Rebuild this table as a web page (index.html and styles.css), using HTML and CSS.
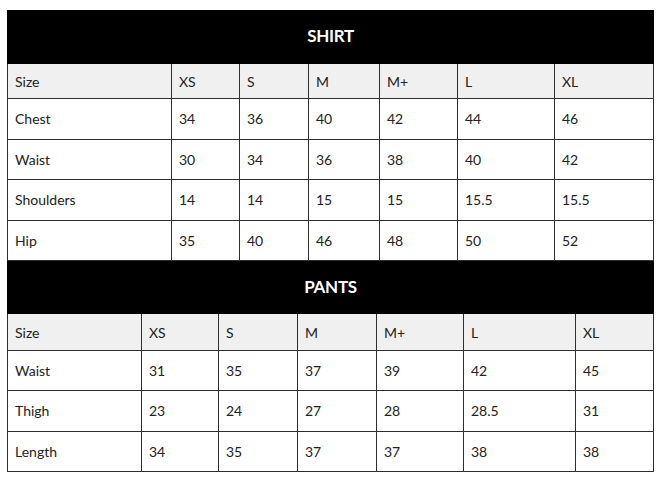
FILE: index.html
```html
<!DOCTYPE html>
<html>
<head>
<meta charset="utf-8">
<link rel="stylesheet" href="styles.css">
</head>
<body>
<div class="wrap">
  <table class="chart shirt">
    <colgroup>
      <col class="c1"><col class="c2"><col class="c3"><col class="c4"><col class="c5"><col class="c6"><col class="c7">
    </colgroup>
    <tr class="head"><th colspan="7">SHIRT</th></tr>
    <tr class="sizes"><td>Size</td><td>XS</td><td>S</td><td>M</td><td>M+</td><td>L</td><td>XL</td></tr>
    <tr class="row"><td>Chest</td><td>34</td><td>36</td><td>40</td><td>42</td><td>44</td><td>46</td></tr>
    <tr class="row"><td>Waist</td><td>30</td><td>34</td><td>36</td><td>38</td><td>40</td><td>42</td></tr>
    <tr class="row"><td>Shoulders</td><td>14</td><td>14</td><td>15</td><td>15</td><td>15.5</td><td>15.5</td></tr>
    <tr class="row"><td>Hip</td><td>35</td><td>40</td><td>46</td><td>48</td><td>50</td><td>52</td></tr>
  </table>
  <table class="chart pants">
    <colgroup>
      <col class="c1"><col class="c2"><col class="c3"><col class="c4"><col class="c5"><col class="c6"><col class="c7">
    </colgroup>
    <tr class="head"><th colspan="7">PANTS</th></tr>
    <tr class="sizes"><td>Size</td><td>XS</td><td>S</td><td>M</td><td>M+</td><td>L</td><td>XL</td></tr>
    <tr class="row"><td>Waist</td><td>31</td><td>35</td><td>37</td><td>39</td><td>42</td><td>45</td></tr>
    <tr class="row"><td>Thigh</td><td>23</td><td>24</td><td>27</td><td>28</td><td>28.5</td><td>31</td></tr>
    <tr class="row"><td>Length</td><td>34</td><td>35</td><td>37</td><td>37</td><td>38</td><td>38</td></tr>
  </table>
</div>
</body>
</html>
```

FILE: styles.css
```css
html, body {
  margin: 0;
  padding: 0;
  background: #ffffff;
}
.wrap {
  padding: 10px 0 0 7px;
  width: 647px;
}
.chart {
  width: 647px;
  table-layout: fixed;
  border-collapse: collapse;
  font-family: "Lato", "Open Sans", sans-serif;
  font-size: 14px;
  color: #222;
}
.chart td {
  border: 1px solid #2e2e2e;
  padding: 0 7px;
  vertical-align: middle;
  text-align: left;
  white-space: nowrap;
}
.chart th {
  background: #000;
  color: #fff;
  border: 1px solid #000;
  font-size: 17px;
  font-weight: 700;
  letter-spacing: -0.3px;
  text-align: center;
  padding: 0 0 3px;
}
.shirt .head { height: 53px; }
.pants .head { height: 52px; }
.sizes td { background: #f0f0f0; }
.shirt .sizes { height: 35px; }
.shirt .row { height: 40.5px; }
.pants .sizes { height: 37px; }
.pants .row { height: 40.34px; }

.shirt .c1 { width: 164px; }
.shirt .c2 { width: 68px; }
.shirt .c3 { width: 69px; }
.shirt .c4 { width: 71px; }
.shirt .c5 { width: 78px; }
.shirt .c6 { width: 97px; }
.shirt .c7 { width: 99px; }

.pants .c1 { width: 134px; }
.pants .c2 { width: 77px; }
.pants .c3 { width: 79px; }
.pants .c4 { width: 79px; }
.pants .c5 { width: 87px; }
.pants .c6 { width: 112px; }
.pants .c7 { width: 78px; }
```
